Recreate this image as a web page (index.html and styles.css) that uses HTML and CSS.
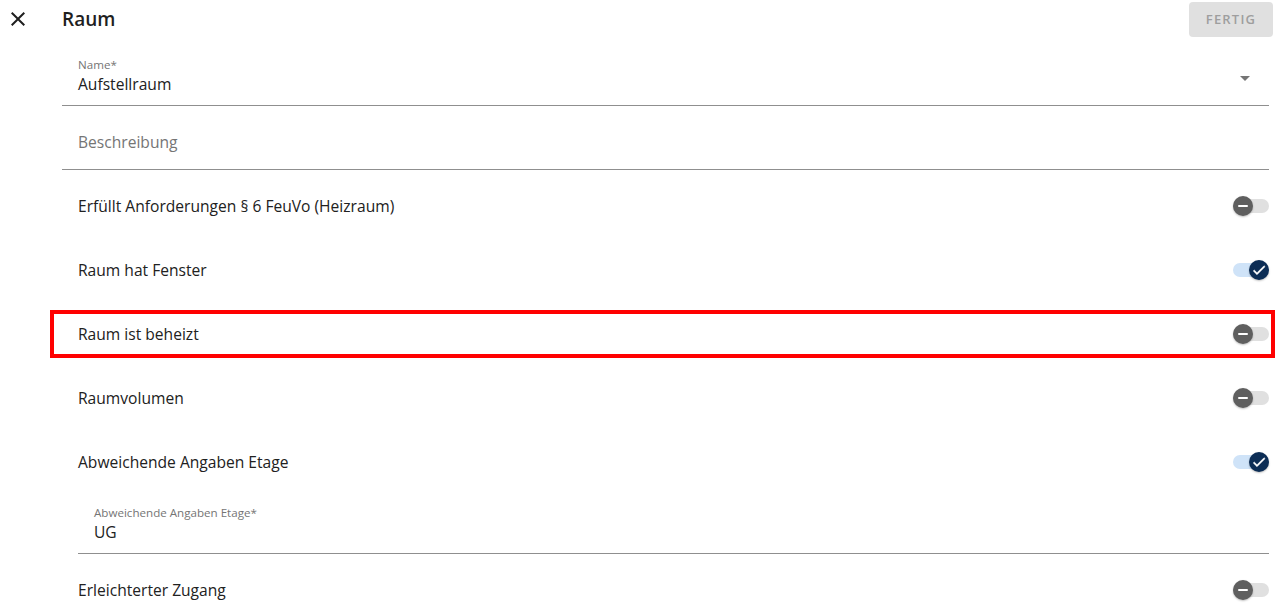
FILE: index.html
```html
<!DOCTYPE html>
<html lang="de">
<head>
<meta charset="utf-8">
<title>Raum</title>
<link rel="stylesheet" href="styles.css">
</head>
<body>
<header class="topbar">
  <button class="icon-btn" aria-label="Schließen">
    <svg width="24" height="24" viewBox="0 0 24 24"><path d="M19 6.41L17.59 5 12 10.59 6.41 5 5 6.41 10.59 12 5 17.59 6.41 19 12 13.41 17.59 19 19 17.59 13.41 12z" fill="#1f1f1f"/></svg>
  </button>
  <h1 class="title">Raum</h1>
  <button class="done-btn" disabled>FERTIG</button>
</header>

<main class="form">
  <div class="field field-select">
    <div class="field-label">Name*</div>
    <div class="field-value">Aufstellraum</div>
    <svg class="select-arrow" width="10" height="5" viewBox="0 0 10 5"><path d="M0 0h10L5 5z" fill="#757575"/></svg>
  </div>

  <div class="field field-plain">
    <div class="field-placeholder">Beschreibung</div>
  </div>

  <div class="rows">
    <div class="toggle-row">
      <span class="row-label">Erfüllt Anforderungen § 6 FeuVo (Heizraum)</span>
      <span class="switch off"><span class="thumb"><span class="minus"></span></span></span>
    </div>
    <div class="toggle-row">
      <span class="row-label">Raum hat Fenster</span>
      <span class="switch on"><span class="thumb"><svg width="16" height="16" viewBox="0 0 24 24"><path d="M9 16.17L4.83 12l-1.42 1.41L9 19 21 7l-1.41-1.41z" fill="#fff" stroke="#fff" stroke-width="0.8"/></svg></span></span>
    </div>
    <div class="toggle-row highlighted">
      <span class="row-label">Raum ist beheizt</span>
      <span class="switch off"><span class="thumb"><span class="minus"></span></span></span>
    </div>
    <div class="toggle-row">
      <span class="row-label">Raumvolumen</span>
      <span class="switch off"><span class="thumb"><span class="minus"></span></span></span>
    </div>
    <div class="toggle-row">
      <span class="row-label">Abweichende Angaben Etage</span>
      <span class="switch on"><span class="thumb"><svg width="16" height="16" viewBox="0 0 24 24"><path d="M9 16.17L4.83 12l-1.42 1.41L9 19 21 7l-1.41-1.41z" fill="#fff" stroke="#fff" stroke-width="0.8"/></svg></span></span>
    </div>
  </div>

  <div class="field field-nested">
    <div class="field-label">Abweichende Angaben Etage*</div>
    <div class="field-value">UG</div>
  </div>

  <div class="rows rows-last">
    <div class="toggle-row">
      <span class="row-label">Erleichterter Zugang</span>
      <span class="switch off"><span class="thumb"><span class="minus"></span></span></span>
    </div>
  </div>
</main>
</body>
</html>
```

FILE: styles.css
```css
* { box-sizing: border-box; }

html, body {
  margin: 0;
  padding: 0;
  background: #ffffff;
  overflow: hidden;
}

body {
  font-family: "Open Sans", "Noto Sans", sans-serif;
  color: #212121;
  width: 1279px;
  height: 614px;
}

.topbar {
  display: flex;
  align-items: center;
  height: 37px;
  padding: 0 6px 0 6px;
}

.icon-btn {
  width: 24px;
  height: 24px;
  padding: 0;
  margin: 0;
  border: 0;
  background: none;
  display: flex;
}

.title {
  margin: 0 0 0 32px;
  font-size: 19px;
  font-weight: 600;
  color: #1f1f1f;
  flex: 1;
  line-height: 24px;
}

.done-btn {
  width: 84px;
  height: 35px;
  margin-top: 1px;
  border: 0;
  border-radius: 4px;
  background: #e0e0e0;
  color: #9e9e9e;
  font-family: inherit;
  font-size: 13px;
  font-weight: 600;
  letter-spacing: 1.2px;
}

.form {
  padding: 0 10px 0 62px;
  display: flex;
  flex-direction: column;
}

.field {
  position: relative;
  border-bottom: 1px solid #8f8f8f;
  padding-left: 16px;
}

.field-select {
  padding-top: 21px;
  padding-bottom: 11px;
}

.field-label {
  font-size: 11.6px;
  line-height: 14px;
  color: #757575;
}

.field-value {
  margin-top: 2px;
  font-size: 15.6px;
  line-height: 20px;
  color: #212121;
}

.select-arrow {
  position: absolute;
  right: 19px;
  top: 39px;
}

.field-plain {
  padding-top: 26px;
  padding-bottom: 17px;
}

.field-placeholder {
  font-size: 15.6px;
  line-height: 20px;
  color: #757575;
}

.rows {
  display: flex;
  flex-direction: column;
  gap: 16px;
  margin-top: 12px;
}

.toggle-row {
  position: relative;
  height: 48px;
  display: flex;
  align-items: center;
  justify-content: space-between;
  padding-left: 16px;
}

.row-label {
  font-size: 15.6px;
  line-height: 20px;
}

.highlighted::after {
  content: "";
  position: absolute;
  left: -12px;
  right: -6px;
  top: 0;
  bottom: 0;
  border: 4px solid #ff0000;
  pointer-events: none;
}

.switch {
  position: relative;
  width: 36px;
  height: 14px;
  border-radius: 7px;
  background: #e0e0e0;
}

.switch.on {
  background: #cfe3f8;
}

.thumb {
  position: absolute;
  top: -3px;
  left: 0;
  width: 20px;
  height: 20px;
  border-radius: 50%;
  background: #5f5f5f;
  display: flex;
  align-items: center;
  justify-content: center;
  box-shadow: 0 1px 2px rgba(0, 0, 0, 0.25);
}

.switch.on .thumb {
  left: 16px;
  background: #0c2d55;
}

.minus {
  width: 10px;
  height: 2px;
  background: #ffffff;
  border-radius: 1px;
}

.field-nested {
  margin-left: 16px;
  padding-top: 20px;
  padding-bottom: 11px;
}

.rows-last {
  margin-top: 12px;
}
```
